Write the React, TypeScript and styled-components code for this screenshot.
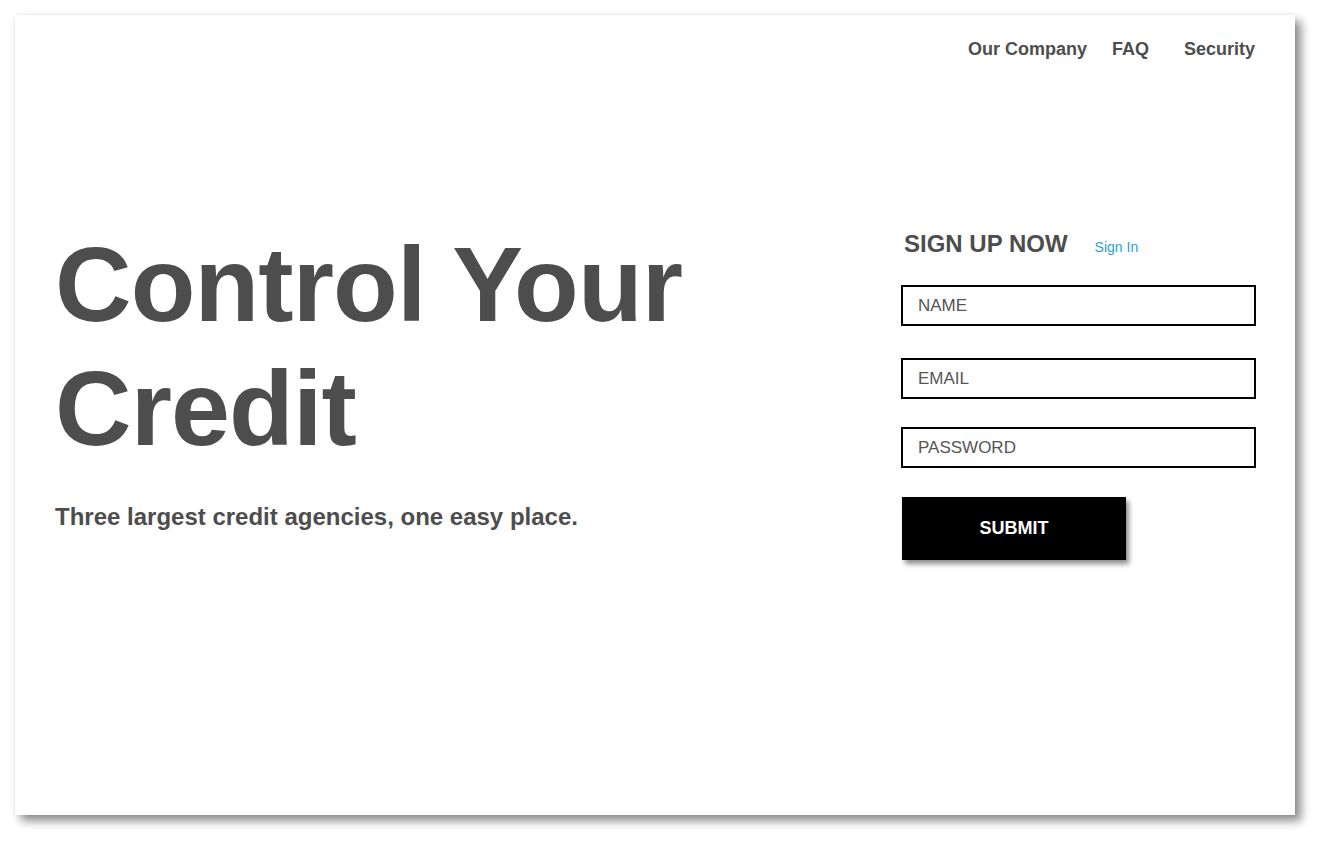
import React from "react";
import styled, { createGlobalStyle } from "styled-components";

const Global = createGlobalStyle`
  html, body { margin: 0; padding: 0; background: #ffffff; }
  body { font-family: "Liberation Sans", Arial, sans-serif; }
  * { box-sizing: border-box; }
`;

const Stage = styled.div`
  width: 1325px;
  height: 845px;
  padding: 15px 0 0 15px;
`;

const Card = styled.div`
  width: 1280px;
  height: 800px;
  background: #ffffff;
  box-shadow: 6px 6px 9px rgba(0, 0, 0, 0.45), 0 0 4px rgba(0, 0, 0, 0.08);
  display: flex;
  flex-direction: column;
  color: #4d4d4d;
`;

const Nav = styled.nav`
  display: flex;
  justify-content: flex-end;
  align-items: center;
  padding: 15px 40px 0 0;
  height: 53px;
`;

const NavLink = styled.a<{ $gap: number }>`
  font-size: 18px;
  font-weight: 700;
  color: #4d4d4d;
  text-decoration: none;
  margin-left: ${(p) => p.$gap}px;
`;

const Main = styled.div`
  display: flex;
  justify-content: space-between;
  padding: 0 39px 0 40px;
`;

const Hero = styled.div`
  padding-top: 154px;
`;

const Title = styled.h1`
  margin: 0;
  font-size: 106px;
  line-height: 124px;
  font-weight: 700;
  letter-spacing: -0.9px;
  color: #4d4d4d;
`;

const Tagline = styled.p`
  margin: 33px 0 0 0;
  font-size: 24px;
  font-weight: 700;
  color: #4d4d4d;
`;

const Form = styled.form`
  width: 355px;
  padding-top: 162px;
  display: flex;
  flex-direction: column;
`;

const FormHead = styled.div`
  display: flex;
  align-items: baseline;
  padding-left: 3px;
  height: 47px;
`;

const HeadTitle = styled.h2`
  margin: 0;
  font-size: 24px;
  font-weight: 700;
  color: #4d4d4d;
`;

const SignIn = styled.a`
  margin-left: 27px;
  font-size: 14px;
  color: #2a9fd6;
  text-decoration: none;
`;

const Field = styled.input<{ $mt: number }>`
  margin-top: ${(p) => p.$mt}px;
  width: 355px;
  height: 41px;
  border: 2px solid #000;
  padding: 0 15px;
  font-family: "Liberation Sans", Arial, sans-serif;
  font-size: 17px;
  color: #555;
  outline: none;
  &::placeholder { color: #555; }
`;

const Submit = styled.button`
  margin: 29px 0 0 1px;
  width: 224px;
  height: 63px;
  background: #000;
  color: #fff;
  border: none;
  font-family: "Liberation Sans", Arial, sans-serif;
  font-size: 18px;
  font-weight: 700;
  box-shadow: 3px 4px 5px rgba(0, 0, 0, 0.45);
  cursor: pointer;
`;

export default function App() {
  return (
    <>
      <Global />
      <Stage>
        <Card>
          <Nav>
            <NavLink $gap={0}>Our Company</NavLink>
            <NavLink $gap={25}>FAQ</NavLink>
            <NavLink $gap={35}>Security</NavLink>
          </Nav>
          <Main>
            <Hero>
              <Title>
                Control Your
                <br />
                Credit
              </Title>
              <Tagline>Three largest credit agencies, one easy place.</Tagline>
            </Hero>
            <Form onSubmit={(e) => e.preventDefault()}>
              <FormHead>
                <HeadTitle>SIGN UP NOW</HeadTitle>
                <SignIn>Sign In</SignIn>
              </FormHead>
              <Field $mt={8} placeholder="NAME" />
              <Field $mt={32} placeholder="EMAIL" />
              <Field $mt={28} type="password" placeholder="PASSWORD" />
              <Submit type="submit">SUBMIT</Submit>
            </Form>
          </Main>
        </Card>
      </Stage>
    </>
  );
}
